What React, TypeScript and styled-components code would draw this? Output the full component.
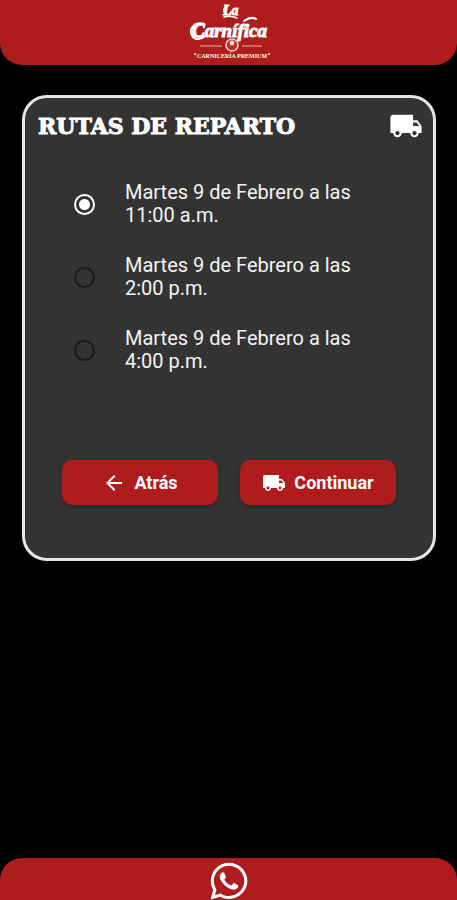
import React, { useState } from "react";
import styled, { createGlobalStyle } from "styled-components";
import { MdArrowBack, MdLocalShipping } from "react-icons/md";
import { FaWhatsapp } from "react-icons/fa";

const GlobalStyle = createGlobalStyle`
  *, *::before, *::after { box-sizing: border-box; }
  body {
    margin: 0;
    background: #000;
    color: #f4f4f4;
    font-family: Roboto, "Liberation Sans", sans-serif;
  }
`;

const Page = styled.div`
  display: flex;
  flex-direction: column;
  min-height: 100vh;
`;

const Header = styled.header`
  display: flex;
  justify-content: center;
  height: 65px;
  background: #ae1c1e;
  border-radius: 0 0 22px 22px;
`;

const Main = styled.main`
  flex: 1;
  padding: 30px 21px 30px 22px;
`;

const Card = styled.form`
  display: flex;
  flex-direction: column;
  padding: 11px 10px 53px 13px;
  background: #333;
  border: 3px solid #e6e6e6;
  border-radius: 25px;
`;

const CardHeader = styled.div`
  display: flex;
  align-items: center;
  justify-content: space-between;
  height: 34px;
`;

const Title = styled.h1`
  margin: 0;
  font: bold 22px/28px "DejaVu Serif", serif;
  color: #fff;
  -webkit-text-stroke: 1px #fff;
  text-transform: uppercase;
  white-space: nowrap;
`;

const Options = styled.fieldset`
  display: flex;
  flex-direction: column;
  gap: 27px;
  min-width: 0;
  margin: 0;
  padding: 38px 52px 0 36px;
  border: 0;
`;

const Option = styled.label`
  display: flex;
  align-items: center;
  gap: 30px;
  font-size: 20px;
  line-height: 23px;
  cursor: pointer;
`;

const Radio = styled.input`
  appearance: none;
  flex: none;
  width: 21px;
  height: 21px;
  margin: 0;
  border: 2px solid #1a1a1a;
  border-radius: 50%;

  &:checked {
    border-color: #fff;
    background: radial-gradient(circle, #fff 5px, transparent 6px);
  }
`;

const Actions = styled.div`
  display: grid;
  grid-template-columns: 1fr 1fr;
  gap: 22px;
  padding: 87px 27px 0 24px;
`;

const Button = styled.button`
  display: flex;
  align-items: center;
  justify-content: center;
  gap: 8px;
  height: 45px;
  padding: 0;
  border: 0;
  border-radius: 10px;
  background: #ae1c1e;
  box-shadow: 0 2px 4px rgba(0, 0, 0, 0.25);
  color: #fff;
  font: bold 18px/24px Roboto, "Liberation Sans", sans-serif;
  cursor: pointer;
`;

const Footer = styled.footer`
  display: flex;
  justify-content: center;
  height: 42px;
  background: #ae1c1e;
  border-radius: 22px 22px 0 0;
`;

const ChatLink = styled.a`
  display: flex;
  align-items: center;
  height: 46px;
  color: #fff;
`;

const LogoLink = styled.a`
  display: block;
  height: 65px;
`;

const Logo = () => (
  <svg width="84" height="65" viewBox="0 0 84 65" role="img" aria-label="La Carnífica" fill="#fff">
    <g fontFamily="Liberation Serif, serif" fontWeight="bold" fontStyle="italic" stroke="#fff">
      <text x="36" y="15" fontSize="14" strokeWidth="0.8">La</text>
      <text x="5" y="37" fontSize="19" strokeWidth="1">Carnífica</text>
    </g>
    <g fill="none" stroke="#fff" strokeLinecap="round">
      <path d="M17 24C7 22 2 29 5 35C7 40 13 40 18 36" strokeWidth="2.5" />
      <path d="M40 6Q36 8 37 12M37 17Q44 15 50 18" strokeWidth="1.6" />
      <path d="M57 21Q64 16 69 19" strokeWidth="2" />
    </g>
    <path d="M13 46H35M55 46H75" stroke="#eeb6b0" strokeWidth="1" />
    <circle cx="45" cy="45" r="6" fill="#b5302f" stroke="#f3c9c4" strokeWidth="1.6" />
    <circle cx="45" cy="43" r="2.4" fill="#f6dcd8" />
    <circle cx="8" cy="54" r="1" />
    <circle cx="82" cy="54" r="1" />
    <text x="45" y="58" textAnchor="middle" fontFamily="Liberation Serif, serif" fontWeight="bold" fontSize="6">
      CARNICERÍA PREMIUM
    </text>
  </svg>
);

const routes = ["11:00 a.m.", "2:00 p.m.", "4:00 p.m."];

export default function App() {
  const [selected, setSelected] = useState(routes[0]);
  return (
    <Page>
      <GlobalStyle />
      <Header>
        <LogoLink href="#" aria-label="La Carnífica">
          <Logo />
        </LogoLink>
      </Header>
      <Main>
        <Card onSubmit={(e) => e.preventDefault()}>
          <CardHeader>
            <Title>Rutas de reparto</Title>
            <MdLocalShipping size={34} color="#fff" aria-hidden />
          </CardHeader>
          <Options aria-label="Rutas de reparto">
            {routes.map((time) => (
              <Option key={time}>
                <Radio
                  type="radio"
                  name="route"
                  value={time}
                  checked={selected === time}
                  onChange={() => setSelected(time)}
                />
                <span>Martes 9 de Febrero a las {time}</span>
              </Option>
            ))}
          </Options>
          <Actions>
            <Button type="button">
              <MdArrowBack size={24} aria-hidden />
              Atrás
            </Button>
            <Button type="submit">
              <MdLocalShipping size={24} aria-hidden />
              Continuar
            </Button>
          </Actions>
        </Card>
      </Main>
      <Footer>
        <ChatLink href="#whatsapp" aria-label="WhatsApp">
          <FaWhatsapp size={42} />
        </ChatLink>
      </Footer>
    </Page>
  );
}
